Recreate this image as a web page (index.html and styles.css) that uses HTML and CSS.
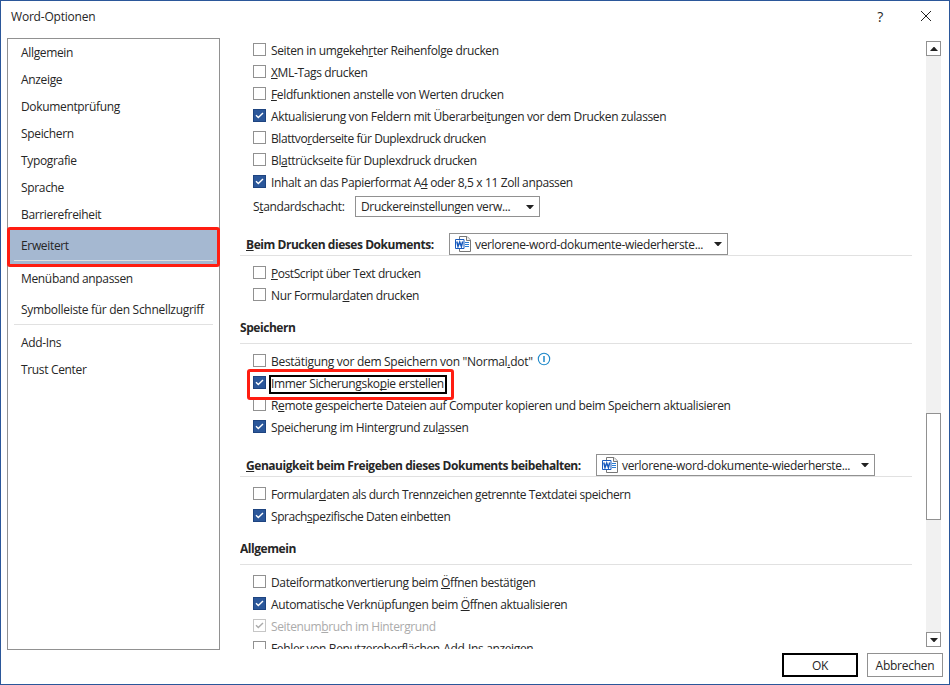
FILE: index.html
```html
<!DOCTYPE html>
<html lang="de">
<head>
    <meta charset="UTF-8">
    <meta name="viewport" content="width=device-width, initial-scale=1.0">
    <title>Word-Optionen</title>
    <link rel="stylesheet" href="styles.css">
</head>
<body>
    <!-- shared icons -->
    <svg class="sprite" width="0" height="0">
        <symbol id="word-doc" viewBox="0 0 16 16">
            <path d="M4.5 3.5V.5h7.500l3.500 3.500v11.500h-11v-3" fill="#fff" stroke="#777"/>
            <path d="M11.500.5v4h4" fill="#eee" stroke="#777"/>
            <path d="M10 6.500h4M10 8.500h4M10 10.500h4" stroke="#2b7cd3"/>
            <path d="M.5 3.500h8.500v9H.5z" fill="#fff" stroke="#185abd"/>
            <path d="M1.800 5.500l1.200 5 1.700-4.500 1.700 4.500 1.300-5" fill="none" stroke="#185abd" stroke-width="1.500"/>
        </symbol>
        <symbol id="tick" viewBox="0 0 13 13">
            <path d="M3 6.300l2.300 2.300L10 4" fill="none" stroke="currentColor" stroke-width="1.400"/>
        </symbol>
        <symbol id="arrow" viewBox="0 0 8 4">
            <path d="M0 0h8L4 4.500z" fill="#222"/>
        </symbol>
    </svg>

    <div class="dialog">
        <header class="titlebar">
            <span class="title">Word-Optionen</span>
            <span class="help">?</span>
            <svg class="close" width="10" height="10" viewBox="0 0 10 10"><path d="M0 0l10 10M10 0L0 10" stroke="#222" fill="none"/></svg>
        </header>

        <div class="main">
            <nav class="sidebar">
                <a class="item">Allgemein</a>
                <a class="item">Anzeige</a>
                <a class="item">Dokumentprüfung</a>
                <a class="item">Speichern</a>
                <a class="item">Typografie</a>
                <a class="item">Sprache</a>
                <a class="item">Barrierefreiheit</a>
                <a class="item active">Erweitert</a>
                <a class="item">Menüband anpassen</a>
                <a class="item quick">Symbolleiste für den Schnellzugriff</a>
                <div class="divider"></div>
                <a class="item">Add-Ins</a>
                <a class="item">Trust Center</a>
            </nav>

            <div class="content">
                <div class="row"><span class="box"></span><span class="label">Seiten in umgekeh<u>r</u>ter Reihenfolge drucken</span></div>
                <div class="row"><span class="box"></span><span class="label"><u>X</u>ML-Tags drucken</span></div>
                <div class="row"><span class="box"></span><span class="label"><u>F</u>eldfunktionen anstelle von Werten drucken</span></div>
                <div class="row"><span class="box checked"><svg><use href="#tick"/></svg></span><span class="label">Aktualisierung von Feldern mit Überarbei<u>t</u>ungen vor dem Drucken zulassen</span></div>
                <div class="row"><span class="box"></span><span class="label tight">Blattvo<u>r</u>derseite für Duplexdruck drucken</span></div>
                <div class="row"><span class="box"></span><span class="label">Bl<u>a</u>ttrückseite für Duplexdruck drucken</span></div>
                <div class="row"><span class="box checked"><svg><use href="#tick"/></svg></span><span class="label">Inhalt an das Papierformat A<u>4</u> oder 8,5 x 11 Zoll anpassen</span></div>
                <div class="tray">
                    <span class="tray-label">S<u>t</u>andardschacht:</span>
                    <div class="select small"><span class="value">Druckereinstellungen verw...</span><svg class="arrow"><use href="#arrow"/></svg></div>
                </div>

                <div class="heading with-select print">
                    <span class="heading-text"><u>B</u>eim Drucken dieses Dokuments:</span>
                    <div class="select"><svg class="doc"><use href="#word-doc"/></svg><span class="value">verlorene-word-dokumente-wiederherste...</span><svg class="arrow"><use href="#arrow"/></svg></div>
                </div>
                <div class="row"><span class="box"></span><span class="label tight"><u>P</u>ostScript über Text drucken</span></div>
                <div class="row"><span class="box"></span><span class="label">Nur Formular<u>d</u>aten drucken</span></div>

                <div class="heading">Speichern</div>
                <div class="row"><span class="box"></span><span class="label loose">Bestätigung vor dem Speichern von "Normal<u>.</u>dot"</span>
                    <svg class="info" width="14" height="14" viewBox="0 0 14 14"><circle cx="7" cy="7" r="5.700" fill="none" stroke="#1e88c9" stroke-width="1.100"/><path d="M7 4v6" stroke="#1e88c9" stroke-width="1.500"/></svg>
                </div>
                <div class="row marked"><span class="box checked"><svg><use href="#tick"/></svg></span><span class="label focused">Immer Sicherungsko<u>p</u>ie erstellen</span></div>
                <div class="row"><span class="box"></span><span class="label">R<u>e</u>mote gespeicherte Dateien auf Computer kopieren und beim Speichern aktualisieren</span></div>
                <div class="row"><span class="box checked"><svg><use href="#tick"/></svg></span><span class="label">Speicherung im Hintergrund zul<u>a</u>ssen</span></div>

                <div class="heading with-select share">
                    <span class="heading-text"><u>G</u>enauigkeit beim Freigeben dieses Dokuments beibehalten:</span>
                    <div class="select"><svg class="doc"><use href="#word-doc"/></svg><span class="value">verlorene-word-dokumente-wiederherste...</span><svg class="arrow"><use href="#arrow"/></svg></div>
                </div>
                <div class="row"><span class="box"></span><span class="label tight">Formular<u>d</u>aten als durch Trennzeichen getrennte Textdatei speichern</span></div>
                <div class="row"><span class="box checked"><svg><use href="#tick"/></svg></span><span class="label tight">Sprach<u>s</u>pezifische Daten einbetten</span></div>

                <div class="heading">Allgemein</div>
                <div class="row"><span class="box"></span><span class="label">Dateiformatkonvertierung beim <u>Ö</u>ffnen bestätigen</span></div>
                <div class="row"><span class="box checked"><svg><use href="#tick"/></svg></span><span class="label">Automatische Verknüpfungen beim <u>Ö</u>ffnen aktualisieren</span></div>
                <div class="row disabled"><span class="box"><svg><use href="#tick"/></svg></span><span class="label">Seitenum<u>b</u>ruch im Hintergrund</span></div>
                <div class="row"><span class="box"></span><span class="label">Fehler von Benutzeroberflächen-Add-Ins anzeigen</span></div>
            </div>

            <div class="scrollbar">
                <div class="scroll-button"><svg class="arrow up"><use href="#arrow"/></svg></div>
                <div class="thumb"></div>
                <div class="scroll-button"><svg class="arrow"><use href="#arrow"/></svg></div>
            </div>
        </div>

        <footer class="buttons">
            <button class="default">OK</button>
            <button>Abbrechen</button>
        </footer>
    </div>
</body>
</html>
```
FILE: styles.css
```css
*, *::before, *::after {
    box-sizing: border-box;
}
body {
    margin: 0;
    font-family: "Open Sans", "Noto Sans", sans-serif;
    font-size: 12px;
    letter-spacing: -0.36px;
    color: #262626;
}
u {
    text-underline-offset: 1px;
    text-decoration-thickness: 1px;
    text-decoration-skip-ink: none;
}
.sprite {
    position: absolute;
}
.dialog {
    width: 950px;
    height: 685px;
    border: 1px solid #2b579a;
    background-color: white;
    display: flex;
    flex-direction: column;
}
.titlebar {
    height: 37px;
    padding: 0 18px 7px 10px;
    display: flex;
    align-items: center;
    flex-shrink: 0;
}
.title {
    flex: 1;
    letter-spacing: -0.2px;
}
.help {
    font-size: 14px;
    margin-right: 38px;
}
.close {
    overflow: visible;
}
.main {
    height: 612px;
    padding-left: 6px;
    display: flex;
    flex-shrink: 0;
}
.sidebar {
    width: 213px;
    border: 1px solid #919191;
    display: flex;
    flex-direction: column;
    letter-spacing: -0.34px;
}
.item {
    height: 27px;
    line-height: 28px;
    padding-left: 13px;
    white-space: nowrap;
}
.item.active {
    position: relative;
    height: 40px;
    line-height: 32px;
    margin: -1px -1px -2px;
    padding-left: 11px;
    background-color: #a5b8d1;
    border: 3px solid #ff1d11;
    border-radius: 3px;
}
.item.active::after {
    content: "";
    position: absolute;
    left: 4px;
    right: 4px;
    bottom: 3px;
    height: 1px;
    background-color: #e1e1e1;
}
.item.quick {
    margin-top: 4px;
    letter-spacing: -0.3px;
}
.divider {
    height: 1px;
    margin: 1px 6px 4px;
    background-color: #e1e1e1;
}
.content {
    width: 672px;
    margin-left: 20px;
    padding-top: 2px;
    height: 611px;
    overflow: hidden;
}
.row {
    height: 22px;
    padding: 3px 0 0 13px;
    display: flex;
    align-items: flex-start;
    white-space: nowrap;
}
.box {
    width: 13px;
    height: 13px;
    border: 1px solid #919191;
    flex-shrink: 0;
}
.box svg {
    display: block;
    width: 13px;
    height: 13px;
    margin: -1px;
}
.box.checked {
    background-color: #2b579a;
    border-color: #1e4480;
    color: white;
}
.label {
    height: 17px;
    line-height: 17px;
    margin: -1px 0 0 5px;
}
.label.tight {
    letter-spacing: -0.43px;
}
.label.loose {
    letter-spacing: -0.29px;
}
.label.focused {
    position: relative;
}
.label.focused::after {
    content: "";
    position: absolute;
    inset: 0 -3px -2px -2px;
    border: 2px solid #000;
}
.marked {
    position: relative;
}
.marked::after {
    content: "";
    position: absolute;
    left: 7px;
    top: -4px;
    width: 207px;
    height: 31px;
    border: 3px solid #ff1d11;
    border-radius: 3px;
}
.info {
    margin: -2px 0 0 4px;
}
.disabled {
    color: #ababab;
}
.disabled .box {
    border-color: #c6c6c6;
}
.tray {
    height: 23px;
    padding: 2px 0 0 13px;
    display: flex;
    align-items: center;
}
.tray-label {
    width: 102px;
}
.select {
    width: 279px;
    height: 22px;
    padding: 0 5px;
    border: 1px solid #919191;
    background-color: white;
    display: flex;
    align-items: center;
    white-space: nowrap;
}
.select.small {
    width: 185px;
    height: 21px;
}
.value {
    flex: 1;
}
.arrow {
    width: 8px;
    height: 4px;
    flex-shrink: 0;
}
.arrow.up {
    transform: rotate(180deg);
}
.doc {
    width: 16px;
    height: 16px;
    margin-right: 4px;
}
.heading {
    height: 37px;
    margin-bottom: 7px;
    border-bottom: 1px solid #e1e1e1;
    font-weight: bold;
    letter-spacing: -0.45px;
    line-height: 42px;
}
.heading.with-select {
    height: 23px;
    padding-left: 6px;
    display: flex;
    line-height: 23px;
}
.heading.print {
    margin-top: 16px;
}
.heading.share {
    margin-top: 15px;
}
.heading .select {
    font-weight: normal;
    letter-spacing: -0.34px;
}
.print .heading-text {
    width: 203px;
}
.share .heading-text {
    width: 350px;
}
.scrollbar {
    width: 15px;
    height: 606px;
    margin: 3px 0 0 14px;
    background-color: #f1f1f1;
    display: flex;
    flex-direction: column;
    justify-content: space-between;
}
.scroll-button {
    height: 15px;
    border: 1px solid #919191;
    background-color: white;
    display: flex;
    align-items: center;
    justify-content: center;
}
.thumb {
    height: 107px;
    margin-top: 245px;
    border: 1px solid #919191;
    background-color: white;
}
.buttons {
    padding: 3px 6px 0 0;
    display: flex;
    justify-content: flex-end;
    gap: 9px;
}
button {
    width: 76px;
    height: 24px;
    padding: 0;
    border: 1px solid #919191;
    background-color: white;
    font: inherit;
    letter-spacing: -0.25px;
    color: inherit;
}
button.default {
    border: 2px solid #000;
}
```
